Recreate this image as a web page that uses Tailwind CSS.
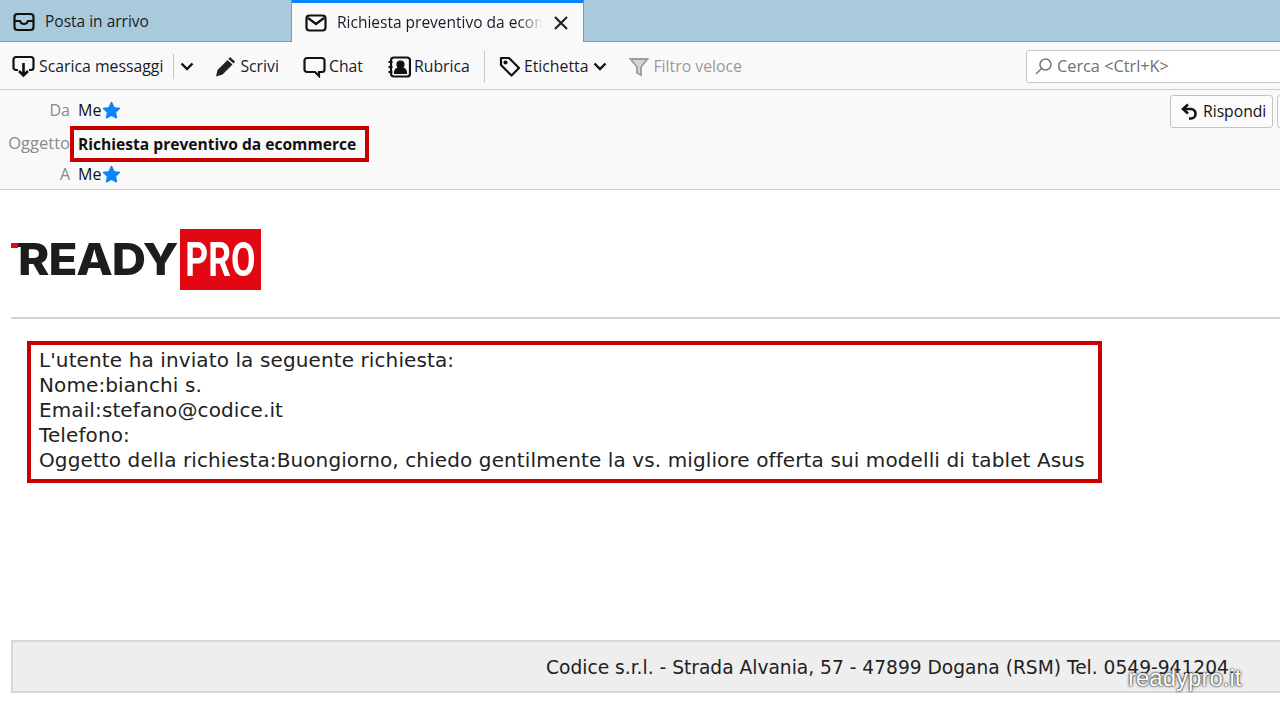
<!DOCTYPE html>
<html><head><meta charset="utf-8"><script src="https://cdn.jsdelivr.net/npm/@tailwindcss/browser@4"></script></head>
<body class="w-[1280px] h-[720px] overflow-hidden bg-white relative font-['Open_Sans',sans-serif] text-[#1a1a2a]">
<div class="h-[42px] bg-[#a8cadb] flex border-b border-[#7f9aaa]">
  <div class="w-[292px] h-[41px] flex items-center pl-[13px] pt-[3px] gap-[10px] text-[15.5px] border-r border-[#7f9aaa]">
    <svg width="22" height="20" viewBox="0 0 22 20" fill="none" stroke="#111" stroke-width="2.2"><rect x="1.5" y="2" width="19" height="16" rx="3"/><path d="M2 9h5q1 3 4 3t4-3h5"/></svg>
    <span>Posta in arrivo</span>
  </div>
  <div class="w-[292px] h-[42px] bg-[#f9f9f9] border-t-[3px] border-t-[#0a84ff] border-r border-r-[#7f9aaa] flex items-center pl-[13px] relative">
    <svg class="mr-[10px] shrink-0" width="22" height="18" viewBox="0 0 22 18" fill="none" stroke="#111" stroke-width="2.2"><rect x="1.5" y="1.5" width="19" height="15" rx="3"/><path d="M3 4l8 6 8-6"/></svg>
    <span class="w-[206px] overflow-hidden whitespace-nowrap text-[15.5px] [mask-image:linear-gradient(to_right,black_88%,transparent)]">Richiesta preventivo da ecommerce</span>
    <svg class="ml-[11px]" width="14" height="14" viewBox="0 0 14 14" stroke="#222" stroke-width="2.2"><path d="M1 1l12 12M13 1L1 13"/></svg>
  </div>
</div>
<div class="h-[48px] bg-[#f9f9f9] border-b border-[#cfcfcf] flex items-center text-[15.8px] relative pt-[2px]">
  <svg class="ml-[12px]" width="23" height="23" viewBox="0 0 23 23" fill="none" stroke="#111" stroke-width="2.2"><path d="M6 15H4a2.500 2.500 0 0 1-2.500-2.500v-8A2.500 2.500 0 0 1 4 2h15a2.500 2.500 0 0 1 2.500 2.500v8A2.500 2.500 0 0 1 19 15h-2"/><path d="M11.500 8v12M7 16l4.500 4.500L16 16" stroke-width="2.600"/></svg>
  <span class="ml-[4px]">Scarica messaggi</span>
  <div class="w-px h-[25px] bg-[#c8c8c8] ml-[10px]"></div>
  <svg class="ml-[6px]" width="14" height="9" viewBox="0 0 14 9" fill="none" stroke="#111" stroke-width="2.400"><path d="M1.500 1.500L7 7l5.500-5.500"/></svg>
  <svg class="ml-[21px]" width="21" height="21" viewBox="0 0 21 21" fill="#222"><path d="M15 1l5 4.500-1.500 2-5-4.500zM12.500 4l5 4.500-10 10-6.500 2 1.500-6.500z"/></svg>
  <span class="ml-[4px]">Scrivi</span>
  <svg class="ml-[24px]" width="23" height="22" viewBox="0 0 23 22" fill="none" stroke="#111" stroke-width="2.200"><path d="M4 2h15a2.500 2.500 0 0 1 2.500 2.500v9A2.500 2.500 0 0 1 19 16h-3v4l-4-4H4a2.500 2.500 0 0 1-2.500-2.500v-9A2.500 2.500 0 0 1 4 2z"/></svg>
  <span class="ml-[3px]">Chat</span>
  <svg class="ml-[25px]" width="23" height="22" viewBox="0 0 23 22" fill="none" stroke="#111" stroke-width="2.200"><rect x="3" y="1.500" width="19" height="19" rx="3"/><path d="M0.500 6h4M0.500 11h4M0.500 16h4" /><circle cx="12.500" cy="8.500" r="3" fill="#111"/><path d="M7 17q0-5 5.500-5T18 17z" fill="#111"/></svg>
  <span class="ml-[3px]">Rubrica</span>
  <div class="w-px h-[32px] bg-[#c8c8c8] ml-[14px]"></div>
  <svg class="ml-[14px]" width="22" height="22" viewBox="0 0 22 22" fill="none" stroke="#111" stroke-width="2.200"><path d="M2 2h8l10 10-7.500 7.500L2 9z" stroke-linejoin="round"/><circle cx="6.500" cy="6.500" r="1" fill="#111"/></svg>
  <span class="ml-[3px]">Etichetta</span>
  <svg class="ml-[5px]" width="14" height="9" viewBox="0 0 14 9" fill="none" stroke="#111" stroke-width="2.400"><path d="M1.500 1.500L7 7l5.500-5.500"/></svg>
  <svg class="ml-[22px]" width="20" height="20" viewBox="0 0 20 20" fill="#d5d5d5" stroke="#9c9c9c" stroke-width="1.800"><path d="M1.500 2h17l-6.500 8v8l-4-2v-6z"/></svg>
  <span class="ml-[4px] text-[#9a9a9a]">Filtro veloce</span>
  <div class="absolute left-[1026px] top-[8px] w-[260px] h-[33px] bg-white border border-[#c8c8c8] rounded-[3px] flex items-center pl-[8px] text-[16.3px] text-[#6f6f6f]">
    <svg width="17" height="17" viewBox="0 0 17 17" fill="none" stroke="#777" stroke-width="1.500"><circle cx="10.500" cy="6.500" r="5.500"/><path d="M6.500 10.500L1 16"/></svg>
    <span class="ml-[5px]">Cerca &lt;Ctrl+K&gt;</span>
  </div>
</div>
<div class="h-[100px] bg-[#f9f9f9] border-b border-[#c8ccd2] relative text-[16px]">
  <div class="h-[42px] flex items-center pb-[2px]">
    <span class="w-[70px] text-right text-[#8a8a8a]">Da</span><span class="ml-[8px] text-[#111]">Me</span>
    <svg class="ml-[1px]" width="19" height="19" viewBox="0 0 18 18" fill="#0a84ff" stroke="#0a84ff" stroke-width="1.500" stroke-linejoin="round"><path d="M9 1.500l2.300 5 5.200.6-3.900 3.500 1.100 5.300L9 13.300l-4.700 2.600 1.100-5.300L1.500 7.100l5.200-.6z"/></svg>
  </div>
  <div class="h-[22px] flex items-center">
    <span class="w-[70px] text-right text-[#8a8a8a] text-[16.5px] pt-[1px]">Oggetto</span>
    <span class="ml-[8px] font-bold text-[#111] text-[15.6px] pt-[3px]">Richiesta preventivo da ecommerce</span>
  </div>
  <div class="h-[42px] flex items-center pb-[2px]">
    <span class="w-[70px] text-right text-[#8a8a8a]">A</span><span class="ml-[8px] text-[#111]">Me</span>
    <svg class="ml-[1px]" width="19" height="19" viewBox="0 0 18 18" fill="#0a84ff" stroke="#0a84ff" stroke-width="1.500" stroke-linejoin="round"><path d="M9 1.500l2.300 5 5.200.6-3.900 3.500 1.100 5.300L9 13.300l-4.700 2.600 1.100-5.300L1.500 7.100l5.200-.6z"/></svg>
  </div>
  <div class="absolute left-[70px] top-[36px] w-[299px] h-[36px] border-[4px] border-[#c80000]"></div>
  <div class="absolute left-[1170px] top-[5px] w-[103px] h-[33px] bg-[#fbfbfb] border border-[#c4c4c4] rounded-[3px] flex items-center pl-[10px] gap-[5px] text-[15.7px]">
    <svg width="17" height="18" viewBox="0 0 17 18" fill="none" stroke="#111" stroke-width="2.600"><path d="M7 1.500L2 6l5 4.500"/><path d="M2.500 6H10a4.500 4.500 0 0 1 4.500 4.500v.5A4.500 4.500 0 0 1 10 15.500H8"/></svg>
    <span class="text-[#111]">Rispondi</span>
  </div>
  <div class="absolute left-[1277px] top-[5px] w-[10px] h-[33px] bg-[#fbfbfb] border border-[#c4c4c4] rounded-[3px]"></div>
</div>
<div class="pl-[11px] pt-[39px]">
  <div class="flex items-start h-[61px] relative">
    <span class="absolute left-0 top-[14px] w-[7px] h-[5px] bg-[#e30613]"></span>
    <span class="absolute left-[7px] top-[14px] w-[6px] h-[4px] bg-[#1d1d1b]"></span>
    <div class="w-[169px] pl-[7px] shrink-0"><span class="inline-block origin-left scale-x-[1.08] font-['Inter',sans-serif] font-extrabold text-[44px] leading-[61px] tracking-[-1px] text-[#1d1d1b] whitespace-nowrap">READY</span></div>
    <div class="w-[81px] h-[61px] bg-[#e30613] flex justify-center text-white font-['Roboto',sans-serif] font-bold text-[48px] leading-[61px]"><span class="shrink-0 inline-block scale-x-[.74]">PRO</span></div>
  </div>
  <div class="h-[2px] bg-[#d2d2d2] mt-[27px]"></div>
</div>
<div class="ml-[27px] mt-[22px] w-[1075px] h-[142px] border-[4px] border-[#c80000] pl-[8px] pt-[3px] font-['DejaVu_Sans',sans-serif] text-[20px] tracking-[.11px] leading-[25px] text-[#222] whitespace-nowrap">
  <div>L'utente ha inviato la seguente richiesta:</div>
  <div>Nome:bianchi s.</div>
  <div>Email:stefano@codice.it</div>
  <div>Telefono:</div>
  <div>Oggetto della richiesta:Buongiorno, chiedo gentilmente la vs. migliore offerta sui modelli di tablet Asus</div>
</div>
<div class="ml-[11px] mt-[157px] w-[1280px] h-[53px] bg-[#eeeeee] border-2 border-[#d8d8d8] pl-[533px] font-['DejaVu_Sans',sans-serif] text-[18.64px] leading-[51px] text-[#222] whitespace-nowrap">Codice s.r.l. - Strada Alvania, 57 - 47899 Dogana (RSM) Tel. 0549-941204.</div>
<div class="absolute left-[1128px] top-[664px] font-['Liberation_Sans',sans-serif] text-[24px] leading-[28px] text-white [text-shadow:0_0_3px_#000,0_0_1px_#333]">readypro.it</div>
</body></html>
